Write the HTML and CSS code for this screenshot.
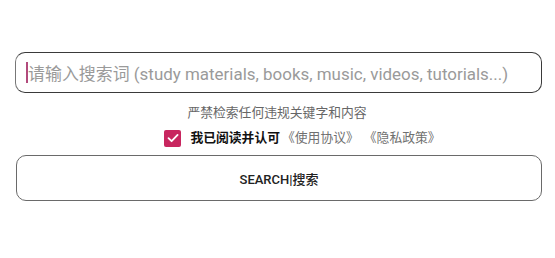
FILE: index.html
```html
<!DOCTYPE html>
<html>
<head>
<meta charset="utf-8">
<link rel="stylesheet" href="styles.css">
</head>
<body>
<div class="page">
  <div class="search-box">
    <span class="caret"></span>
    <span class="placeholder">请输入搜索词 (study materials, books, music, videos, tutorials...)</span>
  </div>
  <div class="notice">严禁检索任何违规关键字和内容</div>
  <div class="agree">
    <span class="checkbox">
      <svg viewBox="0 0 16 16" width="16" height="16"><path d="M3.5 8.2 L6.6 11.2 L12.6 4.9" fill="none" stroke="#fff" stroke-width="1.8" stroke-linecap="round" stroke-linejoin="round"/></svg>
    </span>
    <span class="agree-text">我已阅读并认可</span>
    <span class="link">《使用协议》</span><span class="link link-gap">《隐私政策》</span>
  </div>
  <div class="search-btn">SEARCH|搜索</div>
</div>
</body>
</html>
```
FILE: styles.css
```css
html, body {
  margin: 0;
  padding: 0;
  background: #fff;
}
body {
  font-family: Roboto, "Noto Sans CJK SC", sans-serif;
}
.page {
  width: 555px;
  padding: 52px 13px 0 15px;
  box-sizing: border-box;
  display: flex;
  flex-direction: column;
  align-items: stretch;
}
.search-box {
  height: 41px;
  box-sizing: border-box;
  border: 1px solid #3a3a3a;
  border-left-color: #777;
  border-radius: 10px;
  display: flex;
  align-items: center;
  padding-left: 10px;
}
.caret {
  width: 2px;
  height: 21px;
  background: #b24a7c;
}
.placeholder {
  font-size: 16.95px;
  color: #9a9a9a;
  white-space: nowrap;
}
.notice {
  margin-top: 12px;
  text-align: center;
  font-size: 12.8px;
  color: #666;
  line-height: 16px;
  padding-right: 3px;
}
.agree {
  margin-top: 8px;
  display: flex;
  align-items: center;
  justify-content: center;
  font-size: 12.8px;
  line-height: 18px;
  padding-left: 48px;
}
.checkbox {
  width: 17px;
  height: 17px;
  border-radius: 2px;
  background: #c8265f;
  display: flex;
  align-items: center;
  justify-content: center;
  margin-right: 9px;
}
.checkbox svg {
  display: block;
}
.agree-text {
  font-weight: bold;
  color: #111;
  margin-right: 2px;
}
.link {
  display: inline-block;
  color: #707070;
}
.link-gap {
  margin-left: 5px;
}
.search-btn {
  margin-top: 8px;
  margin-left: 1px;
  height: 46px;
  box-sizing: border-box;
  border: 1px solid #6a6a6a;
  border-radius: 10px;
  display: flex;
  align-items: center;
  justify-content: center;
  font-size: 13px;
  font-weight: 500;
  color: #222;
}
```
